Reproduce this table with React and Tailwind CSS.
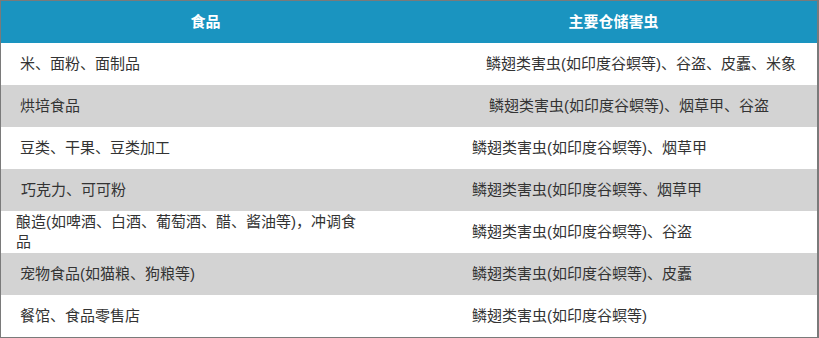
export default function App() {
  const rows = [
    { a: "米、面粉、面制品", b: "鳞翅类害虫(如印度谷螟等)、谷盗、皮蠹、米象", pa: "pl-[19px]", pb: "pl-[76px]", gray: false },
    { a: "烘培食品", b: "鳞翅类害虫(如印度谷螟等)、烟草甲、谷盗", pa: "pl-[19px]", pb: "pl-[79px]", gray: true },
    { a: "豆类、干果、豆类加工", b: "鳞翅类害虫(如印度谷螟等)、烟草甲", pa: "pl-[19px]", pb: "pl-[62px]", gray: false },
    { a: "巧克力、可可粉", b: "鳞翅类害虫(如印度谷螟等、烟草甲", pa: "pl-[20px]", pb: "pl-[62px]", gray: true },
    { a: "酿造(如啤酒、白酒、葡萄酒、醋、酱油等)，冲调食品", b: "鳞翅类害虫(如印度谷螟等)、谷盗", pa: "pl-[15px]", pb: "pl-[62px]", gray: false },
    { a: "宠物食品(如猫粮、狗粮等)", b: "鳞翅类害虫(如印度谷螟等)、皮蠹", pa: "pl-[19px]", pb: "pl-[62px]", gray: true },
    { a: "餐馆、食品零售店", b: "鳞翅类害虫(如印度谷螟等)", pa: "pl-[19px]", pb: "pl-[62px]", gray: false },
  ];
  return (
    <div
      className="w-[819px] h-[338px] bg-white border-t border-l border-b border-r-2 border-[#7a7a7a] text-[15px] text-[#333333]"
      style={{ fontFamily: '"Liberation Sans", "Noto Sans CJK SC", sans-serif' }}
    >
      <div className="grid grid-cols-[409px_1fr] h-[42px] bg-[#1a94c0] text-white font-bold">
        <div className="flex items-center justify-center">食品</div>
        <div className="flex items-center justify-center">主要仓储害虫</div>
      </div>
      {rows.map((r, i) => (
        <div
          key={i}
          className={`grid grid-cols-[409px_1fr] h-[42px] leading-[20px] ${r.gray ? "bg-[#d3d3d3]" : "bg-white"}`}
        >
          <div className={`flex items-center ${r.pa}`}>
            <span className="w-[350px]">{r.a}</span>
          </div>
          <div className={`flex items-center ${r.pb}`}>
            <span>{r.b}</span>
          </div>
        </div>
      ))}
    </div>
  );
}
